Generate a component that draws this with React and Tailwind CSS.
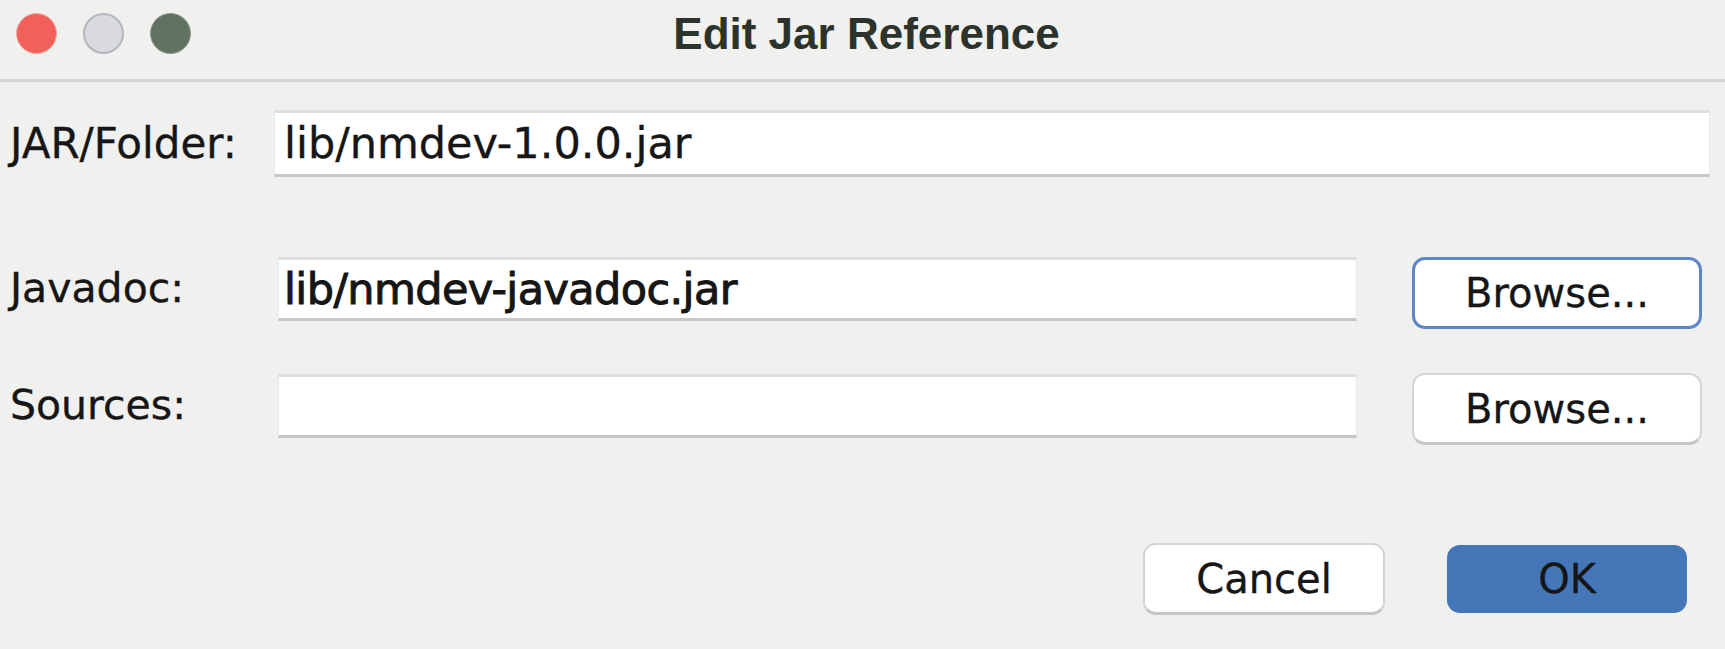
export default function App() {
  const inputBase =
    "bg-white border-t-[3px] border-t-[#dedede] border-b-[3px] border-b-[#c3c6ca] border-x border-x-[#e8e8e8] flex items-center";
  return (
    <div className="w-[1725px] h-[649px] bg-[#f0f0ee] flex flex-col font-['DejaVu_Sans',sans-serif] text-[#161616] [-webkit-text-stroke:0.35px_#161616] overflow-hidden">
      {/* Title bar */}
      <div className="h-[79px] grid grid-cols-[1fr_auto_1fr] items-start">
        <div className="flex gap-[26px] pl-[16px] pt-[13px]">
          <div className="w-[41px] h-[41px] rounded-full bg-[#f2605a] border border-[#f7a7a2]" />
          <div className="w-[41px] h-[41px] rounded-full bg-[#d8dadd] border-2 border-[#b3b8bf]" />
          <div className="w-[41px] h-[41px] rounded-full bg-[#617263] border border-[#8a978b]" />
        </div>
        <div className="pt-[12px] pl-[8px] text-[44px] leading-[44px] font-bold text-[#2c332d] [-webkit-text-stroke:0px] font-['Liberation_Sans',Arial,sans-serif]">
          Edit Jar Reference
        </div>
        <div />
      </div>
      <div className="h-[3px] bg-[#d3d5d7]" />

      {/* Row 1 */}
      <div className="mt-[28px] flex items-center pl-[10px] pr-[15px]">
        <div className="w-[264px] text-[42px]">JAR/Folder:</div>
        <div className={`flex-1 h-[67px] pl-[9px] text-[43px] ${inputBase}`}>
          lib/nmdev-1.0.0.jar
        </div>
      </div>

      {/* Row 2 */}
      <div className="mt-[80px] flex items-start pl-[10px] pr-[23px]">
        <div className="w-[268px] h-[64px] flex items-center text-[41px]">Javadoc:</div>
        <div className={`flex-1 h-[64px] pl-[5px] text-[43px] tracking-[-0.6px] [-webkit-text-stroke:1px_#161616] ${inputBase}`}>
          lib/nmdev-javadoc.jar
        </div>
        <div className="ml-[55px] w-[290px] h-[72px] rounded-[13px] bg-white border-[3px] border-[#5d87c9] flex items-center justify-center text-[40px]">
          Browse...
        </div>
      </div>

      {/* Row 3 */}
      <div className="mt-[44px] flex items-start pl-[10px] pr-[23px]">
        <div className="w-[268px] h-[64px] mt-[1px] flex items-center text-[41px]">Sources:</div>
        <div className={`flex-1 h-[64px] mt-[1px] ${inputBase}`} />
        <div className="ml-[55px] w-[290px] h-[72px] rounded-[13px] bg-white border-2 border-[#d4d4d4] border-b-[3px] border-b-[#c4c6c8] flex items-center justify-center text-[40px]">
          Browse...
        </div>
      </div>

      {/* Bottom buttons */}
      <div className="mt-[98px] flex justify-end items-center gap-[62px] pr-[38px]">
        <div className="w-[242px] h-[72px] rounded-[13px] bg-white border-2 border-[#d4d4d4] border-b-[3px] border-b-[#c4c6c8] flex items-center justify-center text-[40px]">
          Cancel
        </div>
        <div className="w-[240px] h-[68px] rounded-[13px] bg-[#4577b8] flex items-center justify-center text-[40px]">
          OK
        </div>
      </div>
    </div>
  );
}
